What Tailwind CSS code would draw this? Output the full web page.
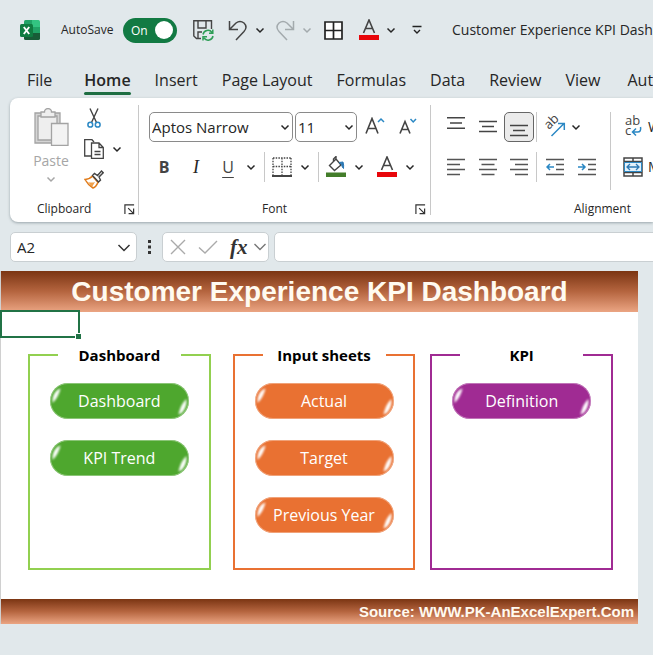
<!DOCTYPE html>
<html lang="en">
<head>
  <meta charset="UTF-8">
  <meta name="viewport" content="width=device-width, initial-scale=1.0">
  <title>Customer Experience KPI Dashboard</title>
  <script src="https://cdn.jsdelivr.net/npm/@tailwindcss/browser@4"></script>
</head>
<body class="min-h-screen overflow-x-hidden bg-[#e1e8eb] text-[#262626] font-['Open_Sans',sans-serif]">

  <!-- shared shapes -->
  <svg class="hidden">
    <symbol id="chev" viewBox="0 0 10 10"><path d="M1.500 3.500L5 7l3.500-3.500" fill="none" stroke="currentColor" stroke-width="1.500"/></symbol>
    <symbol id="launch" viewBox="0 0 12 12"><path d="M1 11V1h10M4.500 4.500L10 10M10.500 5v5.500H5" fill="none" stroke="#333" stroke-width="1.300"/></symbol>
    <symbol id="fontcolor" viewBox="0 0 20 22"><path d="M4.500 14L10 1l5.500 13M6.500 9.500h7" fill="none" stroke="#444" stroke-width="1.600"/><path d="M0 16h20v5H0z" fill="#e8060b"/></symbol>
    <symbol id="shine" viewBox="0 0 139 36">
      <filter id="soft" x="-80%" y="-50%" width="260%" height="200%"><feGaussianBlur stdDeviation="1.200"/></filter>
      <g fill="#fff" filter="url(#soft)">
        <path d="M2.500 20C2 13 5 7 10.500 5.500C9 11 7 16 2.500 20z"/>
        <path d="M136.500 16C137 23 134 30 128.500 31.500C130 25 132 20 136.500 16z"/>
      </g>
      <rect x=".5" y=".5" width="138" height="35" rx="17.500" fill="none" stroke="#fff" stroke-opacity=".35"/>
    </symbol>
  </svg>

  <header class="flex h-[60px] items-center overflow-hidden pl-5 whitespace-nowrap">
    <svg class="size-5 shrink-0" viewBox="0 0 20 20">
      <path d="M4 1.500Q4 0 5.500 0H12v7H4z" fill="#21a366"/><path d="M12 0h6.500Q20 0 20 1.500V7h-8z" fill="#33c481"/>
      <path d="M4 7h8v6H4z" fill="#107c41"/><path d="M12 7h8v6h-8z" fill="#21a366"/>
      <path d="M4 13h16v5.500Q20 20 18.500 20h-13Q4 20 4 18.500z" fill="#185c37"/>
      <rect y="4" width="13" height="13" rx="1.500" fill="#107c41"/>
      <path d="M3.800 7l5.400 7M9.200 7l-5.400 7" stroke="#fff" stroke-width="1.900"/>
    </svg>
    <label for="autosave" class="ml-[21px] w-[62px] shrink-0 text-xs">AutoSave</label>
    <span class="relative h-[25px] w-[54px] shrink-0">
      <input id="autosave" type="checkbox" checked class="size-full appearance-none rounded-full bg-[#127a43]">
      <span class="pointer-events-none absolute left-[8px] top-[4px] text-xs leading-[17px] text-white">On</span>
      <span class="pointer-events-none absolute right-[4px] top-[3px] size-[18px] rounded-full bg-white"></span>
    </span>
    <button aria-label="Save" class="ml-4 shrink-0"><svg class="h-[21px] w-[21px]" viewBox="0 0 21 21" fill="none">
      <path d="M8 18.500H3.500L.800 16V.800h17.700V9M5 .800V8h8V.800M5 18v-6h4" stroke="#444" stroke-width="1.400"/>
      <path d="M10 14.500a5 5 0 0 1 9-2M19.800 9.500v3.800H16M20 16a5 5 0 0 1-9 2M10 20.500v-3.800h4" stroke="#2f9e57" stroke-width="1.500"/>
    </svg></button>
    <button aria-label="Undo" class="ml-[14px] flex shrink-0 items-center gap-[7px]">
      <svg class="h-[21px] w-[20px]" viewBox="0 0 20 21" fill="none"><path d="M1.500 1v8.500H10M1.500 9.500L8 3Q12 0 16 3Q20 7 16 11.500L8 20" stroke="#444" stroke-width="1.500"/></svg>
      <svg class="size-[10px]"><use href="#chev"/></svg>
    </button>
    <button aria-label="Redo" disabled class="ml-[10px] flex shrink-0 items-center gap-[7px] text-[#a3aaad]">
      <svg class="h-[21px] w-[20px]" viewBox="0 0 20 21" fill="none"><path d="M18.500 1v8.500H10M18.500 9.500L12 3Q8 0 4 3Q0 7 4 11.500L12 20" stroke="currentColor" stroke-width="1.500"/></svg>
      <svg class="size-[10px]"><use href="#chev"/></svg>
    </button>
    <button aria-label="All borders" class="ml-3 shrink-0"><svg class="size-[19px]" viewBox="0 0 19 19"><path d="M1 1h17v17H1zM9.500 1v17M1 9.500h17" fill="#fff" stroke="#222" stroke-width="1.700"/></svg></button>
    <button aria-label="Font color" class="ml-4 flex shrink-0 items-center gap-[7px]">
      <svg class="h-[22px] w-[20px]"><use href="#fontcolor"/></svg>
      <svg class="size-[10px]"><use href="#chev"/></svg>
    </button>
    <button aria-label="Customize toolbar" class="ml-4 shrink-0"><svg class="size-[10px]" viewBox="0 0 10 10"><path d="M.500 1.500h9M2 5l3 3 3-3" fill="none" stroke="#222" stroke-width="1.400"/></svg></button>
    <span class="ml-[30px] text-sm">Customer Experience KPI Dashboard</span>
  </header>

  <nav class="flex h-[38px] items-start gap-[24px] overflow-hidden pl-[27px] pt-[8px] text-base leading-6 whitespace-nowrap">
    <a href="#" class="mr-2 shrink-0">File</a>
    <a href="#" class="shrink-0 font-semibold"><span class="block">Home</span><span class="block h-[3px] rounded-full bg-[#1e6e42]"></span></a>
    <a href="#" class="shrink-0">Insert</a>
    <a href="#" class="shrink-0">Page Layout</a>
    <a href="#" class="shrink-0">Formulas</a>
    <a href="#" class="shrink-0">Data</a>
    <a href="#" class="shrink-0">Review</a>
    <a href="#" class="shrink-0">View</a>
    <a href="#" class="ml-[3px] shrink-0">Automate</a>
  </nav>

  <div class="ml-[10px] flex h-[124px] overflow-hidden rounded-l-lg bg-white py-[7px] shadow-[0_1px_3px_#9aa5aa] whitespace-nowrap">
    <!-- Clipboard -->
    <section class="flex w-[129px] shrink-0 flex-col justify-between border-r border-[#c8c8c8]">
      <div class="flex pl-5 pt-[3px]">
        <button disabled class="flex w-[42px] flex-col items-center text-sm text-[#a6a6a6]">
          <svg class="h-[38px] w-[35px]" viewBox="0 0 35 38" fill="#eee" stroke="#a3a3a3" stroke-width="1.300">
            <path d="M1 5h25v30H1z" fill="#d4d4d4"/><path d="M4 8h19v24H4z"/>
            <path d="M7 9V4h3.500a3.500 3.500 0 0 1 7 0H21v5z"/><path d="M17.500 15.500h16.500v22H17.500z" fill="#f3f3f3"/>
          </svg>
          <span class="mt-[5px] leading-5">Paste</span>
          <svg class="mt-[3px] size-[10px]"><use href="#chev"/></svg>
        </button>
        <div class="ml-3 flex flex-col gap-[11px]">
          <button aria-label="Cut" class="flex w-5 justify-center"><svg class="h-[20px] w-[14px]" viewBox="0 0 14 20" fill="none">
            <path d="M3 .500l6.500 14M11 .500l-6.500 14" stroke="#444" stroke-width="1.400"/>
            <circle cx="3.300" cy="16.700" r="2.400" stroke="#2b88c4" stroke-width="1.500"/><circle cx="10.700" cy="16.700" r="2.400" stroke="#2b88c4" stroke-width="1.500"/></svg></button>
          <button aria-label="Copy" class="flex items-center gap-[8px]"><svg class="h-5 w-5" viewBox="0 0 20 20" fill="#fff" stroke="#444" stroke-width="1.300">
            <path d="M7 17H.700V.700H8L10 3"/><path d="M7.500 4H15l4.300 4.500v10.800H7.500zM15 4v4.500h4.300M10.500 12.500h6M10.500 15.500h6"/></svg>
            <svg class="size-[10px]"><use href="#chev"/></svg></button>
          <button aria-label="Format Painter" class="w-5"><svg class="h-[19px] w-5" viewBox="0 0 20 19" fill="none">
            <path d="M1 9.500Q6 9 8.500 6L14 12.500Q12 17 9 18Q4 15 1 9.500z" fill="#fff" stroke="#e07b1a" stroke-width="1.500"/><path d="M4 12q4 1 7 0l-3 5z" fill="#f0a04b"/>
            <path d="M8.500 5.500l2-2 3 2 4-4.500 1.700 1.700L15 7l1.500 3-2 2z" fill="#fff" stroke="#444" stroke-width="1.400"/></svg></button>
        </div>
      </div>
      <div class="flex items-center pl-[27px]">
        <h2 class="w-[87px] text-xs leading-3">Clipboard</h2>
        <button aria-label="Clipboard settings"><svg class="block size-[11px]"><use href="#launch"/></svg></button>
      </div>
    </section>

    <!-- Font -->
    <section class="flex w-[292px] shrink-0 flex-col justify-between border-r border-[#c8c8c8]">
      <div class="pl-[10px] pt-[7px]">
        <div class="flex items-center">
          <div class="relative w-[144px]">
            <select aria-label="Font" class="h-[30px] w-full appearance-none rounded-[5px] border border-[#8a8a8a] bg-white pl-[2px] text-[15px]"><option>Aptos Narrow</option></select>
            <svg class="pointer-events-none absolute right-[3px] top-[10px] size-[10px]"><use href="#chev"/></svg>
          </div>
          <div class="relative ml-[2px] w-[62px]">
            <select aria-label="Font size" class="h-[30px] w-full appearance-none rounded-[5px] border border-[#8a8a8a] bg-white pl-[2px] text-[15px]"><option>11</option></select>
            <svg class="pointer-events-none absolute right-[3px] top-[10px] size-[10px]"><use href="#chev"/></svg>
          </div>
          <button aria-label="Increase font size" class="ml-2"><svg class="h-[20px] w-5" viewBox="0 0 20 20" fill="none"><path d="M1 16.500L7 1.500l6 15M3 11.500h8" stroke="#444" stroke-width="1.600"/><path d="M13 5l3-3 3 3" stroke="#2b88c4" stroke-width="1.500"/></svg></button>
          <button aria-label="Decrease font size" class="ml-[14px]"><svg class="h-[20px] w-[18px]" viewBox="0 0 18 20" fill="none"><path d="M1 16.500L6 4.500l5 12M3 12.500h6" stroke="#444" stroke-width="1.600"/><path d="M11.500 2l2.700 3L17 2" stroke="#2b88c4" stroke-width="1.500"/></svg></button>
        </div>
        <div class="mt-[10px] flex h-[30px] items-center text-base">
          <button class="w-[30px] font-bold text-[#444]">B</button>
          <button class="w-[34px] font-['Liberation_Serif',serif] text-lg italic">I</button>
          <button class="w-[30px] text-[#444] underline underline-offset-4">U</button>
          <button aria-label="Underline style" class="ml-[3px]"><svg class="size-[10px]"><use href="#chev"/></svg></button>
          <span class="ml-[8px] h-[30px] w-px bg-[#c8c8c8]"></span>
          <button aria-label="Borders" class="ml-[7px] flex items-center gap-[8px]"><svg class="h-5 w-[20px]" viewBox="0 0 20 20" fill="none" stroke="#444"><path d="M1 1h18M1 9.500h18M1 1v17M10 1v17M19 1v17" stroke-width="1.300" stroke-dasharray="1.500 1.200"/><path d="M0 19h20" stroke-width="2"/></svg>
            <svg class="size-[10px]"><use href="#chev"/></svg></button>
          <span class="ml-[8px] h-[30px] w-px bg-[#c8c8c8]"></span>
          <button aria-label="Fill color" class="ml-[7px] flex items-center gap-[8px]"><svg class="h-[22px] w-5" viewBox="0 0 20 22" fill="none"><path d="M3.500 9.500L10 3l5 6-6.500 5.500zM10 3V.500L7.500 3v3" stroke="#444" stroke-width="1.400"/><path d="M13 6.500l4-.500q1 3 .500 6.500-1.500-1-2-4.500z" fill="#2b78b4" stroke="#2b78b4"/><path d="M0 16.500h20v4.500H0z" fill="#437d2a"/></svg>
            <svg class="size-[10px]"><use href="#chev"/></svg></button>
          <button aria-label="Font color" class="ml-[13px] flex items-center gap-[8px]"><svg class="h-[22px] w-[20px]"><use href="#fontcolor"/></svg>
            <svg class="size-[10px]"><use href="#chev"/></svg></button>
        </div>
      </div>
      <div class="flex items-center pr-[4px]">
        <h2 class="flex-1 pr-[5px] text-center text-xs leading-3">Font</h2>
        <button aria-label="Font settings"><svg class="block size-[11px]"><use href="#launch"/></svg></button>
      </div>
    </section>

    <!-- Alignment -->
    <section class="flex w-[343px] shrink-0 flex-col justify-between">
      <div class="flex pl-[9px] pt-[7px]">
        <div>
          <div class="flex h-[30px] items-center">
            <button aria-label="Top align" class="flex w-8 justify-center"><svg class="h-[20px] w-[18px]" viewBox="0 0 18 20"><path d="M0 .750h18M3 6h12M0 11.250h18" stroke="#444" stroke-width="1.500"/></svg></button>
            <button aria-label="Middle align" class="flex w-8 justify-center"><svg class="h-[20px] w-[18px]" viewBox="0 0 18 20"><path d="M0 4.500h18M3 9.500h12M0 14.500h18" stroke="#444" stroke-width="1.500"/></svg></button>
            <button aria-label="Bottom align" class="flex h-[30px] w-[30px] items-center justify-center rounded-[5px] border border-[#666] bg-[#ebebeb]"><svg class="h-[20px] w-[18px]" viewBox="0 0 18 20"><path d="M0 8.500h18M3 13.500h12M0 18.500h18" stroke="#444" stroke-width="1.500"/></svg></button>
            <span class="ml-[2px] h-[30px] w-px bg-[#c8c8c8]"></span>
            <button aria-label="Orientation" class="ml-2 flex items-center gap-[6px]"><svg class="h-5 w-5 overflow-visible" viewBox="0 0 20 20"><text x="4" y="13" transform="rotate(-45 4 13)" font-size="13" fill="#444">ab</text><path d="M6.500 19L18.500 7M13 6.500h6.300V13" fill="none" stroke="#2b88c4" stroke-width="1.500"/></svg>
              <svg class="size-[10px]"><use href="#chev"/></svg></button>
          </div>
          <div class="mt-[10px] flex h-[30px] items-center">
            <button aria-label="Align left" class="flex w-8 justify-center"><svg class="h-[18px] w-[18px]" viewBox="0 0 18 18"><path d="M0 1.500h18M0 6.500h13M0 11.500h18M0 16.500h13" stroke="#555" stroke-width="1.600"/></svg></button>
            <button aria-label="Center" class="flex w-8 justify-center"><svg class="h-[18px] w-[18px]" viewBox="0 0 18 18"><path d="M0 1.500h18M2.500 6.500h13M0 11.500h18M2.500 16.500h13" stroke="#555" stroke-width="1.600"/></svg></button>
            <button aria-label="Align right" class="flex w-[30px] justify-center"><svg class="h-[18px] w-[18px]" viewBox="0 0 18 18"><path d="M0 1.500h18M5 6.500h13M0 11.500h18M5 16.500h13" stroke="#555" stroke-width="1.600"/></svg></button>
            <span class="ml-[2px] h-[30px] w-px bg-[#c8c8c8]"></span>
            <button aria-label="Decrease indent" class="ml-[9px]"><svg class="h-[18px] w-[18px]" viewBox="0 0 18 18" fill="none"><path d="M0 1.500h18M10 6.500h8M10 11.500h8M0 16.500h18" stroke="#555" stroke-width="1.600"/><path d="M8 9H1M4 6L1 9l3 3" stroke="#2b88c4" stroke-width="1.500"/></svg></button>
            <button aria-label="Increase indent" class="ml-[14px]"><svg class="h-[18px] w-[18px]" viewBox="0 0 18 18" fill="none"><path d="M0 1.500h18M10 6.500h8M10 11.500h8M0 16.500h18" stroke="#555" stroke-width="1.600"/><path d="M0 9h7M4 6l3 3-3 3" stroke="#2b88c4" stroke-width="1.500"/></svg></button>
          </div>
        </div>
        <span class="ml-[14px] h-[78px] w-px bg-[#c8c8c8]"></span>
        <div class="ml-3 text-sm">
          <button class="flex h-[30px] items-center gap-[5px]"><svg class="h-5 w-5 overflow-visible" viewBox="0 0 20 20" fill="none"><text x="2" y="8" font-size="13" fill="#444">ab<tspan x="2" y="18">c</tspan></text><path d="M17.500 10q1 5-3 5H10M13 11.500L9.500 15l3.500 3.500" stroke="#2b88c4" stroke-width="1.500"/></svg>Wrap Text</button>
          <button class="mt-[10px] flex h-[30px] items-center gap-[5px]"><svg class="h-5 w-5" viewBox="0 0 20 20" fill="none"><path d="M1 1h18v18H1zM1 4.500h18M1 15.500h18M10 1v3.500M10 15.500V19" stroke="#444" stroke-width="1.500"/><path d="M1.500 5.500h17v9h-17z" fill="#e3f1fa" stroke="#2b88c4"/><path d="M4 10h12M7 7l-3 3 3 3M13 7l3 3-3 3" stroke="#2b78b4" stroke-width="1.300"/></svg>Merge &amp; Center</button>
        </div>
      </div>
      <h2 class="text-center text-xs leading-3">Alignment</h2>
    </section>
  </div>

  <!-- formula bar -->
  <div class="flex h-[49px] items-center overflow-hidden pl-[10px]">
    <div class="relative w-[127px] shrink-0">
      <input aria-label="Name Box" value="A2" class="block h-[30px] w-full rounded-[5px] border border-[#c9cfd2] bg-white pl-[6px] text-[15px]">
      <svg class="pointer-events-none absolute right-[6px] top-[9px] size-[14px]" viewBox="0 0 14 14"><path d="M1.500 4L7 9.500 12.500 4" fill="none" stroke="#333" stroke-width="1.500"/></svg>
    </div>
    <svg class="ml-[10px] h-4 w-[5px] shrink-0" viewBox="0 0 5 16" fill="#333"><path d="M1 1h3v3H1zM1 6.500h3v3H1zM1 12h3v3H1z"/></svg>
    <div class="ml-[10px] flex h-[30px] w-[107px] shrink-0 items-center rounded-[5px] border border-[#c9cfd2] bg-white pl-[7px]">
      <button aria-label="Cancel"><svg class="block size-4" viewBox="0 0 16 16"><path d="M1 1l14 14M15 1L1 15" stroke="#aaa" stroke-width="1.400"/></svg></button>
      <button aria-label="Enter" class="ml-3"><svg class="block h-4 w-5" viewBox="0 0 20 16"><path d="M1 8.500l6 5.500L19 2" fill="none" stroke="#aaa" stroke-width="1.400"/></svg></button>
      <button class="ml-3 font-['Liberation_Serif',serif] text-[21px] leading-6 font-bold italic text-[#333]">fx</button>
      <svg class="ml-[5px] size-[14px] shrink-0" viewBox="0 0 14 14"><path d="M1.500 4L7 9.500 12.500 4" fill="none" stroke="#777" stroke-width="1.400"/></svg>
    </div>
    <input aria-label="Formula" class="-mr-2 ml-[5px] h-[30px] min-w-0 flex-1 rounded-[5px] border border-[#c9cfd2] bg-white px-2">
  </div>

  <!-- worksheet -->
  <main class="mr-[15px] border-l border-[#d0d0d0] bg-white">
    <h1 class="h-[41px] bg-linear-to-b from-[#7b3512] via-[#b5653f] to-[#eba583] text-center font-['Liberation_Sans',sans-serif] text-[28px] leading-[41px] font-bold text-[#fffaf0]">Customer Experience KPI Dashboard</h1>
    <div class="relative h-[33px]">
      <span class="absolute -left-px -top-[2px] h-[28px] w-[80px] border-2 border-[#217346]"></span>
      <span class="absolute left-[74px] top-[21px] size-[6px] border-l border-t border-white bg-[#217346]"></span>
    </div>
    <div class="flex h-[254px] items-start pl-[27px] pr-[25px] text-base leading-5 text-white">
      <fieldset class="mr-[22px] h-[225px] flex-1 border-2 border-[#92d050]">
        <legend class="mx-auto w-[123px] text-center text-[15px] leading-5 font-bold text-black">Dashboard</legend>
        <div class="flex flex-col items-center gap-[21px] pt-[18px]">
          <button class="relative h-9 w-[139px] rounded-full bg-[#4ea72e]"><svg class="absolute inset-0 size-full"><use href="#shine"/></svg>Dashboard</button>
          <button class="relative h-9 w-[139px] rounded-full bg-[#4ea72e]"><svg class="absolute inset-0 size-full"><use href="#shine"/></svg>KPI Trend</button>
        </div>
      </fieldset>
      <fieldset class="mr-[15px] h-[225px] flex-1 border-2 border-[#e97132]">
        <legend class="mx-auto w-[123px] text-center text-[15px] leading-5 font-bold text-black">Input sheets</legend>
        <div class="flex flex-col items-center gap-[21px] pt-[18px]">
          <button class="relative h-9 w-[139px] rounded-full bg-[#e97132]"><svg class="absolute inset-0 size-full"><use href="#shine"/></svg>Actual</button>
          <button class="relative h-9 w-[139px] rounded-full bg-[#e97132]"><svg class="absolute inset-0 size-full"><use href="#shine"/></svg>Target</button>
          <button class="relative h-9 w-[139px] rounded-full bg-[#e97132]"><svg class="absolute inset-0 size-full"><use href="#shine"/></svg>Previous Year</button>
        </div>
      </fieldset>
      <fieldset class="h-[225px] flex-1 border-2 border-[#a02b93]">
        <legend class="mx-auto w-[123px] text-center text-[15px] leading-5 font-bold text-black">KPI</legend>
        <div class="flex flex-col items-center gap-[21px] pt-[18px]">
          <button class="relative h-9 w-[139px] rounded-full bg-[#a02b93]"><svg class="absolute inset-0 size-full"><use href="#shine"/></svg>Definition</button>
        </div>
      </fieldset>
    </div>
    <footer class="h-[25px] bg-linear-to-b from-[#7b3512] via-[#b5653f] to-[#eba583] pr-1 text-right font-['Liberation_Sans',sans-serif] text-[15px] leading-[25px] font-bold text-[#fffaf0]">Source: WWW.PK-AnExcelExpert.Com</footer>
  </main>
</body>
</html>
